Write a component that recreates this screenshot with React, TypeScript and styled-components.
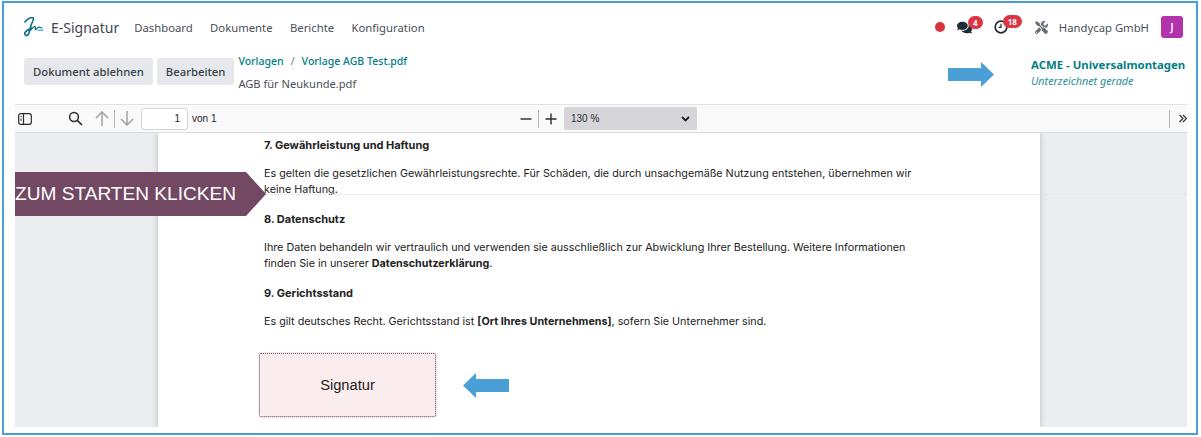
import React from 'react';
import styled, { createGlobalStyle } from 'styled-components';
import { FaComments, FaTools } from 'react-icons/fa';

const GlobalStyle = createGlobalStyle`
  html, body {
    margin: 0;
    padding: 0;
    background: #ffffff;
  }
  * {
    box-sizing: border-box;
  }
`;

const navItems = ['Dashboard', 'Dokumente', 'Berichte', 'Konfiguration'];

const LogoMark = () => (
  <svg width="20" height="20" viewBox="0 0 20 20" fill="none">
    <path d="M1 5C3 2 8 -0.5 9.3 1C10 3 7.5 6 6.5 10C5.8 13 5.5 17 3.5 18.3C1.5 19.3 0 17 1.2 15.3C2.5 13.5 5 12.5 7.5 11" stroke="#0f6f86" strokeWidth="1.6" strokeLinecap="round" />
    <path d="M6.5 13C8 11.5 10 9 11 9.3C12 9.8 10.8 12.5 11.5 12.6C12.5 12.5 13.5 10 15 10.2C16 10.4 16.5 11 18 10.8" stroke="#0f6f86" strokeWidth="1.3" strokeLinecap="round" />
    <path d="M13.5 13.2H19.5" stroke="#3aa3c4" strokeWidth="1.2" />
  </svg>
);

const BlueArrow = ({ left = false }: { left?: boolean }) => (
  <svg width="46" height="25" viewBox="0 0 46 25">
    <path
      d={left ? 'M0 12.5L13 0V6H46V19H13V25Z' : 'M0 6H33V0L46 12.5L33 25V19H0Z'}
      fill="#4a9fd6"
    />
  </svg>
);

const App = () => {
  return (
    <>
      <GlobalStyle />
      <Frame>
        <NavBar>
          <Brand>
            <LogoMark />
            <BrandName>E-Signatur</BrandName>
          </Brand>
          <NavLinks>
            {navItems.map((item) => (
              <NavLink key={item}>{item}</NavLink>
            ))}
          </NavLinks>
          <NavRight>
            <StatusDot />
            <IconBadge>
              <FaComments size={15} color="#1f2a36" />
              <Badge>4</Badge>
            </IconBadge>
            <ClockBadge>
              <svg width="14" height="14" viewBox="0 0 14 14" fill="none">
                <circle cx="7" cy="7" r="5.8" stroke="#1f2a36" strokeWidth="1.7" />
                <path d="M7 3.8V7.4H4.6" stroke="#1f2a36" strokeWidth="1.2" />
              </svg>
              <Badge>18</Badge>
            </ClockBadge>
            <ToolIcon>
              <FaTools size={13} color="#6a6f76" />
            </ToolIcon>
            <CompanyName>Handycap GmbH</CompanyName>
            <Avatar>J</Avatar>
          </NavRight>
        </NavBar>

        <ActionBar>
          <Buttons>
            <ActionButton>Dokument ablehnen</ActionButton>
            <ActionButton>Bearbeiten</ActionButton>
          </Buttons>
          <Crumbs>
            <CrumbRow>
              <CrumbLink>Vorlagen</CrumbLink>
              <CrumbSep>/</CrumbSep>
              <CrumbLink>Vorlage AGB Test.pdf</CrumbLink>
            </CrumbRow>
            <FileName>AGB für Neukunde.pdf</FileName>
          </Crumbs>
          <SignerArea>
            <SignerArrow>
              <BlueArrow />
            </SignerArrow>
            <Signer>
              <SignerName>ACME - Universalmontagen</SignerName>
              <SignerState>Unterzeichnet gerade</SignerState>
            </Signer>
          </SignerArea>
        </ActionBar>

        <Viewer>
          <PdfToolbar>
            <ToolLeft>
              <svg width="14" height="12" viewBox="0 0 14 12" fill="none">
                <rect x="0.7" y="0.7" width="12.6" height="10.6" rx="2" stroke="#2b2b2b" strokeWidth="1.2" />
                <path d="M5.5 1V11" stroke="#2b2b2b" strokeWidth="1.2" />
                <path d="M2.5 3.5H3.8M3 5.5V8" stroke="#2b2b2b" strokeWidth="0.9" />
              </svg>
              <SearchIcon>
                <svg width="15" height="15" viewBox="0 0 15 15" fill="none">
                  <circle cx="6" cy="6" r="4.4" stroke="#2b2b2b" strokeWidth="1.5" />
                  <path d="M9.3 9.3L14 14" stroke="#2b2b2b" strokeWidth="1.7" />
                </svg>
              </SearchIcon>
              <PageArrows>
                <svg width="14" height="15" viewBox="0 0 14 15" fill="none">
                  <path d="M7 15V1M1 7L7 1L13 7" stroke="#a2a2a2" strokeWidth="1.5" />
                </svg>
                <ToolDivider />
                <svg width="14" height="15" viewBox="0 0 14 15" fill="none">
                  <path d="M7 0V14M1 8L7 14L13 8" stroke="#a2a2a2" strokeWidth="1.5" />
                </svg>
              </PageArrows>
              <PageInput>1</PageInput>
              <PageCount>von 1</PageCount>
            </ToolLeft>
            <ToolCenter>
              <svg width="12" height="12" viewBox="0 0 12 12" fill="none">
                <path d="M0.5 6H11.5" stroke="#2b2b2b" strokeWidth="1.4" />
              </svg>
              <ToolDivider />
              <svg width="12" height="12" viewBox="0 0 12 12" fill="none">
                <path d="M0.5 6H11.5M6 0.5V11.5" stroke="#2b2b2b" strokeWidth="1.4" />
              </svg>
              <ZoomSelect>
                130 %
                <svg width="9" height="6" viewBox="0 0 9 6" fill="none">
                  <path d="M1 1L4.5 4.5L8 1" stroke="#1f1f1f" strokeWidth="1.8" />
                </svg>
              </ZoomSelect>
            </ToolCenter>
            <ToolRight>
              <ToolDivider />
              <More>
                <svg width="11" height="11" viewBox="0 0 11 11" fill="none">
                  <path d="M0.7 0.7L5.5 5.5L0.7 10.3M5.5 0.7L10.3 5.5L5.5 10.3" stroke="#2b2b2b" strokeWidth="1.6" />
                </svg>
              </More>
            </ToolRight>
          </PdfToolbar>

          <PdfArea>
            <PdfPage>
              <SectionTitle>7. Gewährleistung und Haftung</SectionTitle>
              <Paragraph>
                Es gelten die gesetzlichen Gewährleistungsrechte. Für Schäden, die durch unsachgemäße Nutzung entstehen, übernehmen wir keine Haftung.
              </Paragraph>
              <SectionTitle>8. Datenschutz</SectionTitle>
              <Paragraph>
                Ihre Daten behandeln wir vertraulich und verwenden sie ausschließlich zur Abwicklung Ihrer Bestellung. Weitere Informationen finden Sie in unserer <strong>Datenschutzerklärung</strong>.
              </Paragraph>
              <SectionTitle>9. Gerichtsstand</SectionTitle>
              <Paragraph>
                Es gilt deutsches Recht. Gerichtsstand ist <strong>[Ort Ihres Unternehmens]</strong>, sofern Sie Unternehmer sind.
              </Paragraph>
              <SignatureRow>
                <SignatureBox>Signatur</SignatureBox>
                <BlueArrow left />
              </SignatureRow>
            </PdfPage>
            <FoldLine />
            <StartRibbon>ZUM STARTEN KLICKEN</StartRibbon>
          </PdfArea>
        </Viewer>
      </Frame>
    </>
  );
};

export default App;

const Frame = styled.div`
  width: 1196px;
  height: 434px;
  margin: 1px 0 0 2px;
  border: 2px solid #4a9fd6;
  padding: 0 9px 6px 11px;
  overflow: hidden;
  display: flex;
  flex-direction: column;
  background: #ffffff;
  font-family: 'Noto Sans', sans-serif;
`;

const NavBar = styled.div`
  display: flex;
  align-items: center;
  height: 48px;
  padding-left: 9px;
  flex-shrink: 0;
`;

const Brand = styled.div`
  display: flex;
  align-items: center;
  gap: 7px;
`;

const BrandName = styled.span`
  font-size: 14px;
  color: #3f4650;
`;

const NavLinks = styled.div`
  display: flex;
  gap: 17.4px;
  margin-left: 15px;
`;

const NavLink = styled.span`
  font-size: 11.3px;
  color: #4a5058;
`;

const NavRight = styled.div`
  display: flex;
  align-items: center;
  margin-left: auto;
  padding-right: 4px;
`;

const StatusDot = styled.span`
  width: 10px;
  height: 10px;
  border-radius: 50%;
  background: #d8353a;
`;

const IconBadge = styled.span`
  position: relative;
  display: flex;
  margin-left: 12px;
  width: 25px;
`;

const ClockBadge = styled(IconBadge)`
  margin-left: 12px;
  width: 40px;
`;

const Badge = styled.span`
  position: absolute;
  left: 11px;
  top: -4px;
  min-width: 15px;
  height: 13px;
  padding: 0 3px;
  border-radius: 7px;
  background: #dc3545;
  color: #ffffff;
  font-size: 8px;
  font-weight: 700;
  line-height: 13px;
  text-align: center;

  ${ClockBadge} & {
    left: 9px;
    top: -5px;
    min-width: 19px;
  }
`;

const ToolIcon = styled.span`
  display: flex;
  margin-left: 1px;
`;

const CompanyName = styled.span`
  margin-left: 11px;
  font-size: 11.3px;
  color: #4a5058;
`;

const Avatar = styled.span`
  width: 22px;
  height: 22px;
  margin-left: 12px;
  border-radius: 3px;
  background: #b233ad;
  color: #ffffff;
  font-size: 10px;
  font-weight: 600;
  line-height: 22px;
  text-align: center;
`;

const ActionBar = styled.div`
  display: flex;
  align-items: flex-start;
  height: 53px;
  padding-left: 9px;
  flex-shrink: 0;
`;

const Buttons = styled.div`
  display: flex;
  gap: 4px;
  margin-top: 7px;
`;

const ActionButton = styled.button`
  height: 27px;
  padding: 0 9px;
  border: none;
  border-radius: 3px;
  background: #e6e8ec;
  color: #3a4048;
  font-family: inherit;
  font-size: 11.3px;
  font-weight: 500;
`;

const Crumbs = styled.div`
  display: flex;
  flex-direction: column;
  margin-left: 4px;
`;

const CrumbRow = styled.div`
  display: flex;
  gap: 7px;
  height: 19px;
  align-items: center;
`;

const CrumbLink = styled.span`
  color: #017e84;
  font-size: 10.55px;
  font-weight: 500;
`;

const CrumbSep = styled.span`
  color: #6c757d;
  font-size: 10.6px;
`;

const FileName = styled.div`
  margin-top: 6px;
  color: #4a5058;
  font-size: 11.1px;
`;

const SignerArea = styled.div`
  display: flex;
  margin-left: auto;
`;

const SignerArrow = styled.div`
  margin-top: 11px;
  margin-right: 37px;
`;

const Signer = styled.div`
  width: 156px;
  margin-top: 6px;
  white-space: nowrap;
`;

const SignerName = styled.div`
  color: #017e84;
  font-size: 11.4px;
  font-weight: 700;
  line-height: 16px;
`;

const SignerState = styled.div`
  color: #2a8f94;
  font-size: 10.8px;
  font-style: italic;
  line-height: 16px;
`;

const Viewer = styled.div`
  flex: 1;
  display: flex;
  flex-direction: column;
  min-height: 0;
`;

const PdfToolbar = styled.div`
  display: grid;
  grid-template-columns: 505px auto 1fr;
  align-items: center;
  height: 29px;
  flex-shrink: 0;
  background: #f9f9fa;
  border-top: 1px solid #e2e2e4;
  border-bottom: 1px solid #dcdcdf;
  font-family: 'Liberation Sans', sans-serif;
`;

const ToolLeft = styled.div`
  display: flex;
  align-items: center;
  padding-left: 3px;
`;

const SearchIcon = styled.span`
  display: flex;
  margin-left: 36px;
`;

const PageArrows = styled.span`
  display: flex;
  align-items: center;
  gap: 5px;
  margin-left: 12px;
`;

const ToolDivider = styled.span`
  width: 1px;
  height: 18px;
  background: #b5b5b8;
`;

const PageInput = styled.div`
  width: 47px;
  height: 22px;
  margin-left: 7px;
  padding-right: 7px;
  border: 1px solid #d4d4d6;
  border-radius: 3px;
  background: #ffffff;
  color: #222222;
  font-size: 10px;
  line-height: 20px;
  text-align: right;
`;

const PageCount = styled.span`
  margin-left: 4px;
  color: #222222;
  font-size: 10px;
`;

const ToolCenter = styled.div`
  display: flex;
  align-items: center;
  gap: 6px;
`;

const ZoomSelect = styled.div`
  display: flex;
  align-items: center;
  justify-content: space-between;
  width: 133px;
  height: 23px;
  margin-left: 1px;
  padding: 0 7px 0 7px;
  border-radius: 2px;
  background: #d5d5da;
  color: #2b2b2b;
  font-size: 10px;
`;

const ToolRight = styled.div`
  display: flex;
  align-items: center;
  justify-content: flex-end;
  gap: 9px;
`;

const More = styled.span`
  display: flex;
  width: 8px;
  overflow: hidden;
`;

const PdfArea = styled.div`
  position: relative;
  flex: 1;
  min-height: 0;
  display: flex;
  overflow: hidden;
  background: #ecedef;
`;

const PdfPage = styled.div`
  width: 882px;
  margin-left: 143px;
  padding: 5px 125px 0 106px;
  background: #ffffff;
  box-shadow: 0 0 6px rgba(0, 0, 0, 0.22);
  font-family: 'Inter', sans-serif;
  color: #222222;
`;

const SectionTitle = styled.div`
  height: 14px;
  font-size: 11px;
  font-weight: 700;
  line-height: 14px;
  margin-bottom: 14px;
`;

const Paragraph = styled.p`
  margin: 0 0 14px;
  font-size: 10.75px;
  line-height: 16px;
`;

const SignatureRow = styled.div`
  display: flex;
  align-items: center;
  gap: 27px;
  margin: 23px 0 0 -5px;
`;

const SignatureBox = styled.div`
  display: flex;
  align-items: center;
  justify-content: center;
  width: 177px;
  height: 64px;
  border: 1px dotted #734863;
  border-radius: 2px;
  background: #fbeced;
  box-shadow: 0 0 2px rgba(0, 0, 0, 0.3);
  color: #1c1c1c;
  font-family: 'Liberation Sans', sans-serif;
  font-size: 14.7px;
`;

const FoldLine = styled.div`
  position: absolute;
  left: 250px;
  right: 0;
  top: 61px;
  border-top: 1px dotted #dedee0;
`;

const StartRibbon = styled.div`
  position: absolute;
  left: 0;
  top: 39px;
  width: 251px;
  height: 44px;
  background: #734863;
  clip-path: polygon(0 0, 231px 0, 100% 50%, 231px 100%, 0 100%);
  color: #ffffff;
  font-family: 'Liberation Sans', sans-serif;
  font-size: 19.1px;
  line-height: 44px;
  white-space: nowrap;
`;
